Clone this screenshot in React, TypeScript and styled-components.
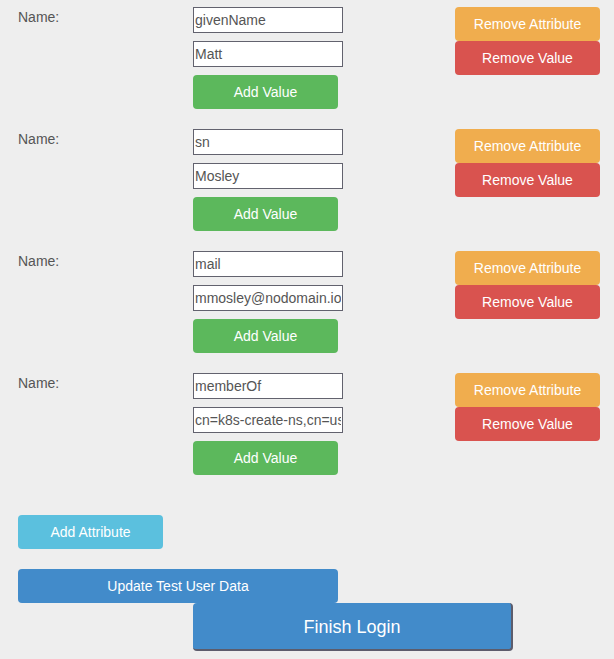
import React from "react";
import styled, { createGlobalStyle } from "styled-components";

const Global = createGlobalStyle`
  html, body { margin: 0; padding: 0; background: #eeeeee; }
  body { font-family: "Liberation Sans", Arial, sans-serif; font-size: 14px; color: #555; }
`;

const Page = styled.div`
  padding: 7px 0 0 18px;
  width: 614px;
  box-sizing: border-box;
  min-height: 659px;
`;

const Group = styled.div`
  display: flex;
  align-items: flex-start;
  margin-bottom: 20px;
`;

const Label = styled.div`
  width: 175px;
  flex: none;
  padding-top: 2px;
  line-height: 16px;
  color: #555;
`;

const Column = styled.div`
  width: 150px;
  flex: none;
  display: flex;
  flex-direction: column;
  gap: 8px;
`;

const Actions = styled.div`
  margin-left: 112px;
  width: 145px;
  display: flex;
  flex-direction: column;
`;

const Input = styled.input`
  box-sizing: border-box;
  width: 150px;
  height: 26px;
  border: 1px solid #62626e;
  background: #fff;
  padding: 0 1px;
  margin: 0;
  font-family: "Liberation Sans", Arial, sans-serif;
  font-size: 14px;
  color: #555;
  outline: none;
`;

const colors: Record<string, string> = {
  green: "#5cb85c",
  orange: "#f0ad4e",
  red: "#d9534f",
  cyan: "#5bc0de",
  blue: "#428bca",
};

const Button = styled.button<{ $c: string; $w?: number }>`
  box-sizing: border-box;
  width: ${(p) => p.$w ?? 145}px;
  height: 34px;
  border: none;
  border-radius: 4px;
  background: ${(p) => colors[p.$c]};
  color: #fff;
  font-family: "Liberation Sans", Arial, sans-serif;
  font-size: 14px;
  padding: 0;
  margin: 0;
  cursor: pointer;
  text-align: center;
  outline: none;
`;

const AddAttr = styled(Button)`
  margin-top: 20px;
`;

const Update = styled(Button)`
  margin-top: 20px;
  display: block;
`;

const Finish = styled.button`
  display: block;
  box-sizing: border-box;
  margin-left: 175px;
  width: 320px;
  height: 48px;
  border: none;
  border-right: 2px solid #5c5c6c;
  border-bottom: 2px solid #5c5c6c;
  border-radius: 4px;
  background: #428bca;
  color: #fff;
  font-family: "Liberation Sans", Arial, sans-serif;
  font-size: 18px;
  padding: 2px 0 0;
`;

const attrs = [
  { name: "givenName", value: "Matt" },
  { name: "sn", value: "Mosley" },
  { name: "mail", value: "mmosley@nodomain.io" },
  { name: "memberOf", value: "cn=k8s-create-ns,cn=users,dc=domain" },
];

export default function App() {
  return (
    <Page>
      <Global />
      {attrs.map((a) => (
        <Group key={a.name}>
          <Label>Name:</Label>
          <Column>
            <Input defaultValue={a.name} />
            <Input defaultValue={a.value} />
            <Button $c="green">Add Value</Button>
          </Column>
          <Actions>
            <Button $c="orange">Remove Attribute</Button>
            <Button $c="red">Remove Value</Button>
          </Actions>
        </Group>
      ))}
      <AddAttr $c="cyan">Add Attribute</AddAttr>
      <Update $c="blue" $w={320}>Update Test User Data</Update>
      <Finish>Finish Login</Finish>
    </Page>
  );
}
